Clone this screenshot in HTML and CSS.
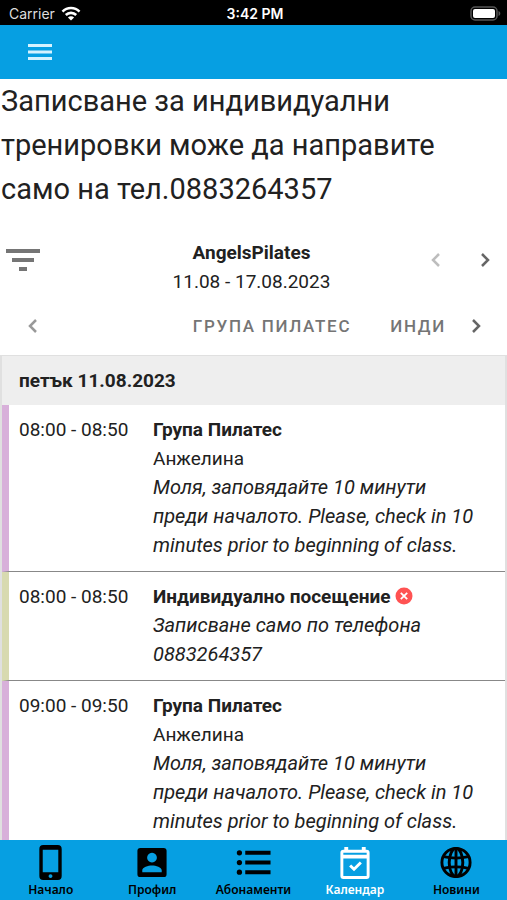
FILE: index.html
```html
<!DOCTYPE html>
<html lang="bg">
<head>
    <meta charset="utf-8" />
    <meta name="viewport" content="width=device-width, initial-scale=1" />
    <title>AngelsPilates</title>
    <link rel="stylesheet" href="styles.css">
</head>
<body>

  <div class="status">
    <div class="carrier">
      <span>Carrier</span>
      <svg width="20" height="15" viewBox="0 0 20 15" fill="none" stroke="#fff" stroke-width="2.6">
        <path d="M1.5 5.6a12 12 0 0 1 17 0" />
        <path d="M4.8 9a7.4 7.4 0 0 1 10.4 0" />
        <path d="M10 14.6L6.9 11.5a4.4 4.4 0 0 1 6.2 0z" fill="#fff" stroke="none" />
      </svg>
    </div>
    <span class="clock">3:42 PM</span>
    <div class="battery">
      <svg width="31" height="15" viewBox="0 0 31 15">
        <rect x="1" y="1" width="26" height="13" rx="4" fill="none" stroke="#555" stroke-width="1.5" />
        <rect x="3" y="3" width="22" height="9" rx="2" fill="#fff" />
        <path d="M28.5 5c2.4 1 2.4 4 0 5z" fill="#555" />
      </svg>
    </div>
  </div>

  <header class="appbar">
    <button class="menu" aria-label="Меню">
      <svg width="24" height="18" viewBox="0 0 24 18" fill="#d5f3ff">
        <rect y="1" width="24" height="3" />
        <rect y="7.500" width="24" height="3" />
        <rect y="14" width="24" height="3" />
      </svg>
    </button>
  </header>

  <main>
    <p class="notice">Записване за индивидуални тренировки може да направите само на тел.0883264357</p>

    <div class="toolbar">
      <button class="filter" aria-label="Филтър">
        <svg width="34" height="24" viewBox="0 0 34 24" fill="#757575">
          <rect x="0" y="1" width="34" height="4" />
          <rect x="6" y="10" width="22" height="4" />
          <rect x="13" y="19" width="8" height="4" />
        </svg>
      </button>
      <div class="period">
        <h1>AngelsPilates</h1>
        <span>11.08 - 17.08.2023</span>
      </div>
      <div class="arrows">
        <button class="arrow" aria-label="Предишна седмица" disabled>
          <svg width="10" height="16" viewBox="0 0 10 16"><path d="M8 2L2 8l6 6" /></svg>
        </button>
        <button class="arrow" aria-label="Следваща седмица">
          <svg width="10" height="16" viewBox="0 0 10 16"><path d="M2 2l6 6-6 6" /></svg>
        </button>
      </div>
    </div>

    <div class="tabs">
      <button class="arrow prev" aria-label="Назад">
        <svg width="10" height="16" viewBox="0 0 10 16"><path d="M8 2L2 8l6 6" /></svg>
      </button>
      <div class="tab-list">
        <button class="tab">Група Пилатес</button>
        <button class="tab">Инди</button>
      </div>
      <button class="arrow next" aria-label="Напред">
        <svg width="10" height="16" viewBox="0 0 10 16"><path d="M2 2l6 6-6 6" /></svg>
      </button>
    </div>

    <table class="schedule">
      <thead>
        <tr><th colspan="2">петък 11.08.2023</th></tr>
      </thead>
      <tbody>
        <tr class="group">
          <td class="time">08:00 - 08:50</td>
          <td>
            <strong>Група Пилатес</strong>
            <div>Анжелина</div>
            <em>Моля, заповядайте 10 минути преди началото. Please, check in 10 minutes prior to beginning of class.</em>
          </td>
        </tr>
        <tr class="single">
          <td class="time">08:00 - 08:50</td>
          <td>
            <strong>Индивидуално посещение
              <svg class="closed" width="18" height="18" viewBox="0 0 18 18">
                <circle cx="9" cy="9" r="8.5" fill="#ff5252" />
                <path d="M5.8 5.8l6.4 6.4M12.2 5.8l-6.4 6.4" stroke="#fff" stroke-width="1.8" />
              </svg>
            </strong>
            <em>Записване само по телефона 0883264357</em>
          </td>
        </tr>
        <tr class="group">
          <td class="time">09:00 - 09:50</td>
          <td>
            <strong>Група Пилатес</strong>
            <div>Анжелина</div>
            <em>Моля, заповядайте 10 минути преди началото. Please, check in 10 minutes prior to beginning of class.</em>
          </td>
        </tr>
      </tbody>
    </table>
  </main>

  <nav class="bottom">
    <a href="#home">
      <svg width="36" height="36" viewBox="0 0 36 36">
        <path fill-rule="evenodd" d="M10 0h15a4 4 0 0 1 4 4v28a4 4 0 0 1-4 4H10a4 4 0 0 1-4-4V4a4 4 0 0 1 4-4zM9.500 5v23h16V5zM17.5 30a2 2 0 1 0 .01 0z" />
      </svg>
      <span>Начало</span>
    </a>
    <a href="#profile">
      <svg width="36" height="36" viewBox="0 0 36 36">
        <path fill-rule="evenodd" d="M6 3h24a3 3 0 0 1 3 3v24a3 3 0 0 1-3 3H6a3 3 0 0 1-3-3V6a3 3 0 0 1 3-3zM18 8a5 5 0 1 0 .01 0zM8 28h20v-2c0-3-6-5-10-5s-10 2-10 5z" />
      </svg>
      <span>Профил</span>
    </a>
    <a href="#passes">
      <svg width="36" height="36" viewBox="0 0 36 36">
        <circle cx="3" cy="8" r="2.7" />
        <circle cx="3" cy="18" r="2.7" />
        <circle cx="3" cy="28" r="2.7" />
        <path d="M9 6h26v4H9zM9 16h26v4H9zM9 26h26v4H9z" />
      </svg>
      <span>Абонаменти</span>
    </a>
    <a href="#calendar" class="active">
      <svg width="36" height="36" viewBox="0 0 36 36">
        <path fill-rule="evenodd" d="M7 2h4v3h14V2h4v3h1a3 3 0 0 1 3 3v24a3 3 0 0 1-3 3H6a3 3 0 0 1-3-3V8a3 3 0 0 1 3-3h1zM6 8v2h24V8zM6 14v18h24V14z" />
        <path d="M13 21l4 4 7-7" fill="none" stroke="currentColor" stroke-width="3" />
      </svg>
      <span>Календар</span>
    </a>
    <a href="#news">
      <svg class="globe" width="36" height="36" viewBox="0 0 36 36">
        <circle cx="18" cy="18" r="14.5" />
        <ellipse cx="18" cy="18" rx="7" ry="14.5" />
        <path d="M5 12q13 3 26 0M5 24q13-3 26 0" />
        <path d="M18 3v30" />
      </svg>
      <span>Новини</span>
    </a>
  </nav>

</body>
</html>
```
FILE: styles.css
```css
* { box-sizing: border-box; }
body {
    font-family: Roboto, "Liberation Sans", sans-serif;
    font-size: 19px;
    line-height: 29px;
    color: #212121;
    background-color: #fff;
    margin: 0;
    height: 100vh;
    display: flex;
    flex-direction: column;
    overflow: hidden;
}
button {
    font-family: inherit;
    background: none;
    border: none;
    padding: 0;
    cursor: pointer;
}
svg { display: block; }

/* status bar */
.status {
    flex: none;
    display: grid;
    grid-template-columns: 1fr auto 1fr;
    align-items: center;
    height: 25px;
    padding: 2px 6px 0 9px;
    background-color: #000;
    color: #fff;
    font-family: Inter, sans-serif;
    font-size: 14px;
    line-height: 22px;
}
.carrier { display: flex; align-items: center; gap: 6px; color: #ddd; }
.clock { font-weight: 600; }
.battery { display: flex; justify-content: flex-end; }

.appbar {
    flex: none;
    display: flex;
    align-items: center;
    height: 54px;
    padding: 0 28px;
    background-color: #069fe2;
}

main { flex: 1; min-height: 0; overflow: hidden; }
.notice { margin: 0; padding: 0 40px 0 1px; font-size: 29px; line-height: 44px; }

/* toolbar */
.toolbar {
    display: grid;
    grid-template-columns: 1fr auto 1fr;
    align-items: start;
    padding: 27px 10px 0 6px;
}
.filter { justify-self: start; height: 44px; }
.period { text-align: center; }
h1 { margin: 0; font-size: 19px; line-height: 29px; font-weight: 700; }
.arrows {
    display: flex;
    align-items: center;
    justify-content: flex-end;
    gap: 39px;
    height: 44px;
    padding-right: 7px;
}
.arrow path { fill: none; stroke: #666; stroke-width: 2.5; }
.arrow:disabled path { stroke: #bdbdbd; }

.tabs { display: flex; align-items: center; height: 59px; padding: 0 26px 0 28px; }
.tab-list { flex: 1; display: flex; justify-content: flex-end; gap: 39px; margin-right: 25px; }
.tab {
    color: #757575;
    font-size: 17px;
    font-weight: 500;
    letter-spacing: 0.1em;
    text-transform: uppercase;
}
.arrow.prev path { stroke: #999; }

/* schedule */
.schedule {
    width: 100%;
    border-collapse: separate;
    border-spacing: 0;
    border-left: 2px solid #e0e0e0;
    border-right: 2px solid #e0e0e0;
}
th {
    padding: 10px 17px;
    text-align: left;
    background-color: #eee;
    border-top: 1px solid #e0e0e0;
}
td { padding: 10px 24px 11px 0; vertical-align: top; border-bottom: 1px solid #888; }
.time { width: 151px; padding: 10px 0 11px 10px; white-space: nowrap; }
.group .time { border-left: 7px solid #d8b0da; }
.single .time { border-left: 7px solid #d8dab0; }
strong { display: block; }
em { display: block; font-size: 20px; }
.closed { display: inline-block; vertical-align: -2px; }

/* bottom navigation */
.bottom { flex: none; display: flex; height: 60px; background-color: #069fe2; }
.bottom a {
    flex: 1;
    display: flex;
    flex-direction: column;
    align-items: center;
    padding-top: 5px;
    color: #000;
    font-family: "Noto Sans", sans-serif;
    font-size: 12px;
    font-weight: 600;
    line-height: 20px;
    text-decoration: none;
}
.bottom svg { fill: currentColor; }
.bottom .globe { fill: none; stroke: currentColor; stroke-width: 3; }
.bottom .active { color: #fff; }
```
